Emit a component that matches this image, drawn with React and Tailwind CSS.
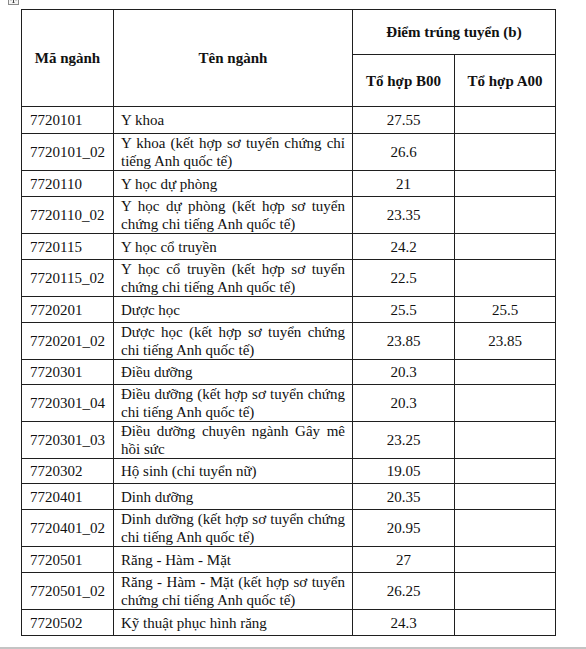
import React from "react";

const rows = [
  { code: "7720101", name: ["Y khoa"], b00: "27.55", a00: "", h: "h-[27px]" },
  { code: "7720101_02", name: ["Y khoa (kết hợp sơ tuyển chứng chỉ", "tiếng Anh quốc tế)"], b00: "26.6", a00: "", h: "h-[36px]" },
  { code: "7720110", name: ["Y học dự phòng"], b00: "21", a00: "", h: "h-[26px]" },
  { code: "7720110_02", name: ["Y học dự phòng (kết hợp sơ tuyển", "chứng chi tiếng Anh quốc tế)"], b00: "23.35", a00: "", h: "h-[37px]" },
  { code: "7720115", name: ["Y học cổ truyền"], b00: "24.2", a00: "", h: "h-[26px]" },
  { code: "7720115_02", name: ["Y học cổ truyền (kết hợp sơ tuyển", "chứng chi tiếng Anh quốc tế)"], b00: "22.5", a00: "", h: "h-[37px]" },
  { code: "7720201", name: ["Dược học"], b00: "25.5", a00: "25.5", h: "h-[26px]" },
  { code: "7720201_02", name: ["Dược học (kết hợp sơ tuyển chứng", "chi tiếng Anh quốc tế)"], b00: "23.85", a00: "23.85", h: "h-[36px]" },
  { code: "7720301", name: ["Điều dưỡng"], b00: "20.3", a00: "", h: "h-[25px]" },
  { code: "7720301_04", name: ["Điều dưỡng (kết hợp sơ tuyển chứng", "chi tiếng Anh quốc tế)"], b00: "20.3", a00: "", h: "h-[37px]" },
  { code: "7720301_03", name: ["Điều dưỡng chuyên ngành Gây mê", "hồi sức"], b00: "23.25", a00: "", h: "h-[37px]" },
  { code: "7720302", name: ["Hộ sinh (chỉ tuyển nữ)"], b00: "19.05", a00: "", h: "h-[25px]" },
  { code: "7720401", name: ["Dinh dưỡng"], b00: "20.35", a00: "", h: "h-[26px]" },
  { code: "7720401_02", name: ["Dinh dưỡng (kết hợp sơ tuyển chứng", "chi tiếng Anh quốc tế)"], b00: "20.95", a00: "", h: "h-[36px]" },
  { code: "7720501", name: ["Răng - Hàm - Mặt"], b00: "27", a00: "", h: "h-[26px]" },
  { code: "7720501_02", name: ["Răng - Hàm - Mặt (kết hợp sơ tuyển", "chứng chỉ tiếng Anh quốc tế)"], b00: "26.25", a00: "", h: "h-[36px]" },
  { code: "7720502", name: ["Kỹ thuật phục hình răng"], b00: "24.3", a00: "", h: "h-[26px]" },
];

const cell =
  "border border-[#1f1f1f] p-0 align-middle font-['Liberation_Serif','Times_New_Roman',serif] text-[15px] leading-[18px]";

const MoveHandle = () => (
  <svg
    className="absolute left-[8px] top-[-6px]"
    width="11"
    height="11"
    viewBox="0 0 11 11"
  >
    <rect x="0.5" y="0.5" width="10" height="10" fill="#f4f4f4" stroke="#8a8a8a" />
    <path d="M5.5 2v7M2 5.5h7" stroke="#444" strokeWidth="1" />
    <path d="M4.5 3 5.5 2 6.5 3M4.5 8 5.5 9 6.5 8M3 4.5 2 5.5 3 6.5M8 4.5 9 5.5 8 6.5" stroke="#444" fill="none" strokeWidth="0.8" />
  </svg>
);

const App = () => {
  return (
    <div className="relative flex flex-col h-[649px] bg-white text-[#111] overflow-hidden font-['Liberation_Serif','Times_New_Roman',serif]">
      <MoveHandle />
      <div className="pt-[9px] pl-[21px]">
        <table className="table-fixed border-collapse w-[534px] text-[#111]">
          <colgroup>
            <col className="w-[92px]" />
            <col className="w-[239px]" />
            <col className="w-[102px]" />
            <col className="w-[101px]" />
          </colgroup>
          <thead>
            <tr className="h-[45px]">
              <th rowSpan={2} className={`${cell} font-bold text-center`}>
                Mã ngành
              </th>
              <th rowSpan={2} className={`${cell} font-bold text-center`}>
                Tên ngành
              </th>
              <th colSpan={2} className={`${cell} font-bold text-center`}>
                Điểm trúng tuyển (b)
              </th>
            </tr>
            <tr className="h-[52px]">
              <th className={`${cell} font-bold text-center`}>Tổ hợp B00</th>
              <th className={`${cell} font-bold text-center`}>Tổ hợp A00</th>
            </tr>
          </thead>
          <tbody>
            {rows.map((r) => (
              <tr key={r.code} className={r.h}>
                <td className={`${cell} pl-[8px]`}>{r.code}</td>
                <td className={`${cell} px-[7px]`}>
                  {r.name.length > 1 ? (
                    <>
                      <span className="block text-justify [text-align-last:justify]">{r.name[0]}</span>
                      <span className="block">{r.name[1]}</span>
                    </>
                  ) : (
                    r.name[0]
                  )}
                </td>
                <td className={`${cell} text-center`}>{r.b00}</td>
                <td className={`${cell} text-center`}>{r.a00}</td>
              </tr>
            ))}
          </tbody>
        </table>
      </div>
      <div className="flex-1" />
      <div className="h-[2px] bg-[#c4c4c4]" />
    </div>
  );
};

export default App;
